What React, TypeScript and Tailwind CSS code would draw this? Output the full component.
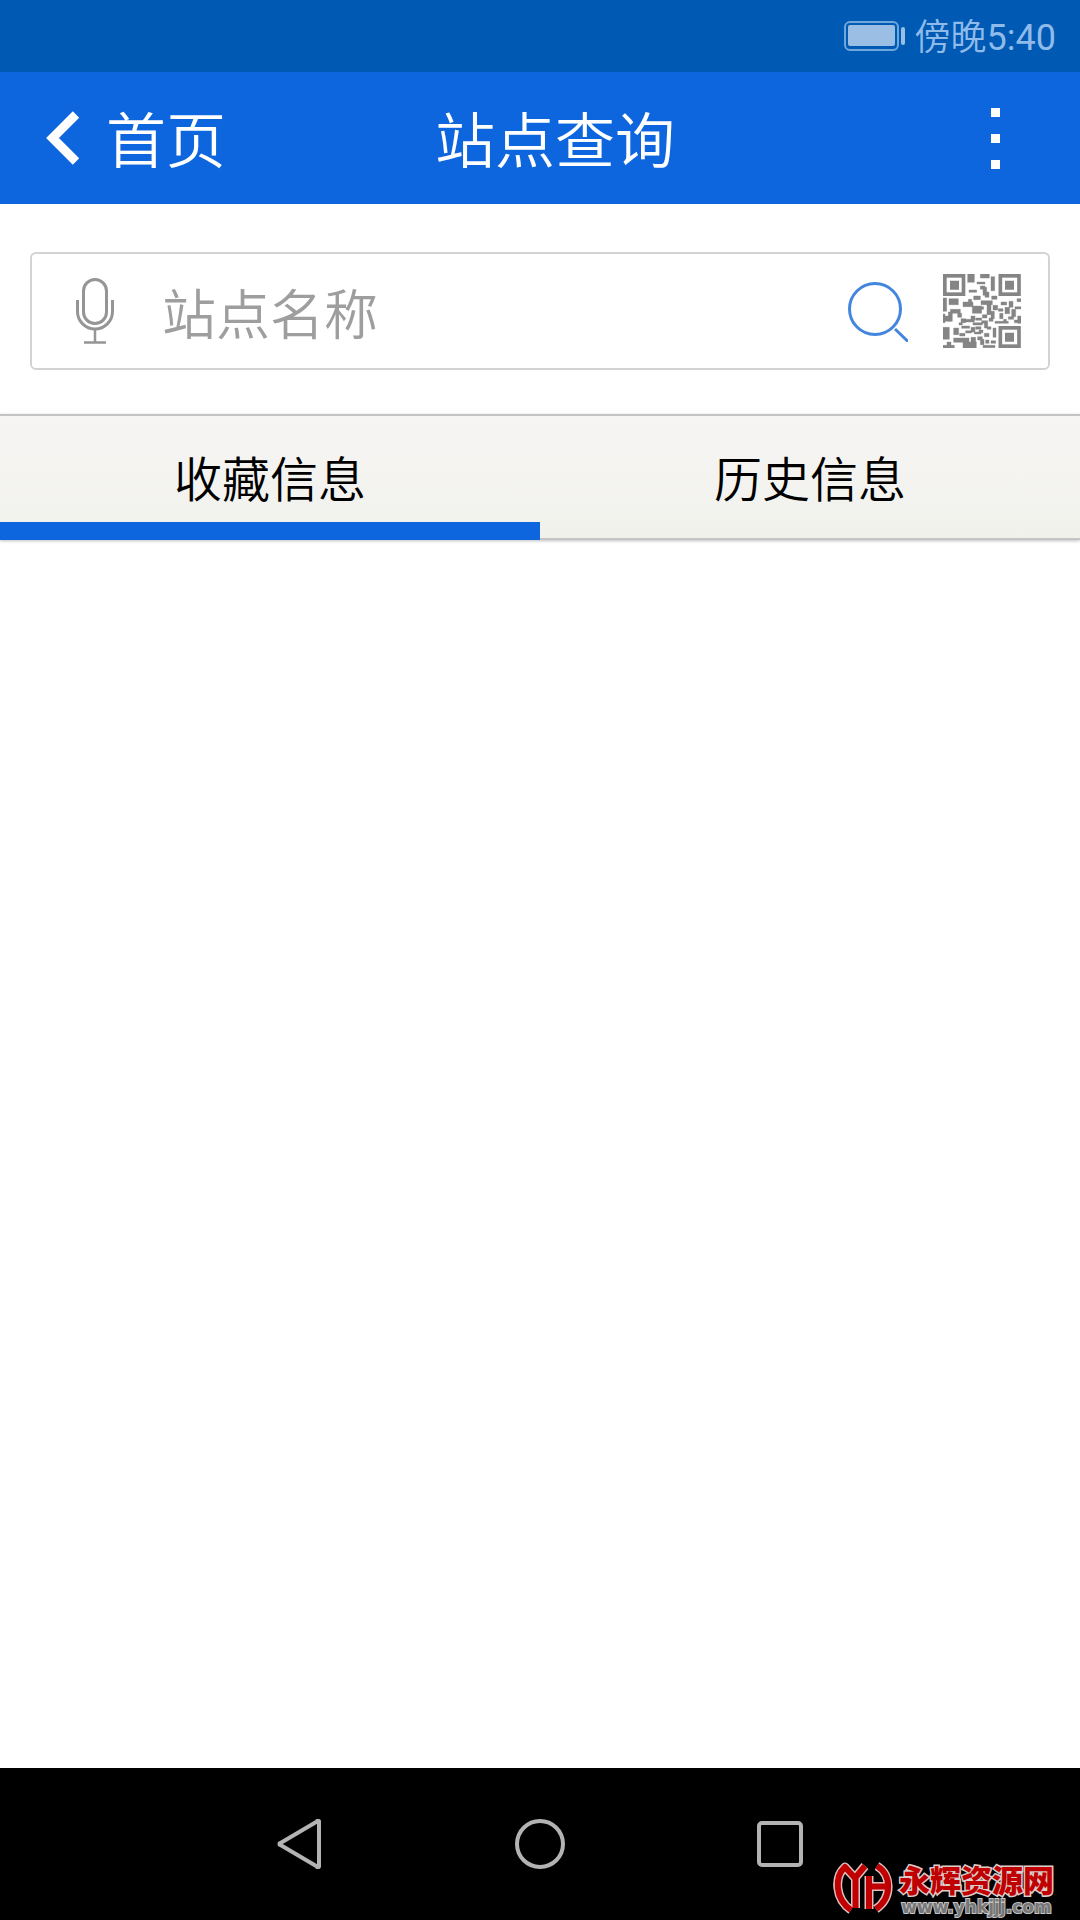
import React, { useState } from 'react';

const FONT = "font-['Roboto','Noto_Sans_CJK_SC',sans-serif]";

const QR_BLOCKS = [
  // top middle
  'M74 0h20v25h-20z M112 0h27v12h-27z M144 8h11v42h-11z M102 24h24v6h-24z',
  'M112 36h14v10h-14z M78 48h23v7h-23z M120 40h11v24h-11z M126 54h12v16h-12z M92 66h20v11h-20z',
  // middle band
  'M0 72h11v40h-11z M18 74h28v18h-28z M60 84h30v14h-30z M76 76h10v16h-10z M88 96h28v22h-28z',
  'M114 80h34v12h-34z M132 88h12v34h-12z M146 66h16v10h-16z M150 94h14v14h-14z M112 98h10v8h-10z',
  'M174 84h17v9h-17z M198 82h12v18h-12z M222 74h12v9h-12z M186 100h14v19h-14z M206 106h12v22h-12z',
  'M216 98h18v7h-18z M166 104h14v8h-14z M144 112h10v22h-10z M224 126h10v22h-10z M196 128h16v8h-16z',
  'M170 118h10v16h-10z M156 142h40v6h-40z M214 138h12v8h-12z M182 136h8v8h-8z',
  // left middle
  'M22 106h30v12h-30z M16 114h12v28h-12z M6 126h16v16h-16z M0 120h6v26h-6z M44 118h12v12h-12z',
  'M0 160h19v36h-19z M32 162h15v20h-15z M54 134h14v12h-14z M48 146h10v7h-10z',
  // centre
  'M62 136h32v8h-32z M84 126h12v12h-12z M98 132h18v7h-18z M90 146h28v7h-28z M118 122h14v10h-14z',
  'M56 156h24v7h-24z M84 160h12v14h-12z M98 158h16v8h-16z M116 140h18v8h-18z M124 148h10v14h-10z',
  'M68 170h18v7h-18z M94 174h20v6h-20z M132 158h12v8h-12z M138 132h12v10h-12z M50 178h16v8h-16z',
  // bottom
  'M32 192h46v13h-46z M12 204h12v12h-12z M0 214h34v8h-34z M60 204h40v18h-40z M84 190h14v18h-14z',
  'M104 188h14v10h-14z M112 196h11v16h-11z M124 178h14v10h-14z M120 214h36v7h-36z M128 198h10v10h-10z',
  'M150 162h9v28h-9z M144 200h14v8h-14z M108 168h12v8h-12z',
].join(' ');

const LOGO_PATH =
  'M18 48C2 37 1 15 12 5l10 11 10-12M22.500 16v30M36 14v33M36 24.500h18M44 4c15 9 15 32-1 43';

const BatteryIcon: React.FC = () => (
  <svg width="62" height="30" viewBox="0 0 62 30" fill="#9bbfe4" aria-hidden="true">
    <rect x="1" y="1" width="53" height="28" rx="5" fill="none" stroke="#6fa6dc" strokeWidth="2" />
    <rect x="4" y="4" width="47" height="21" rx="2" />
    <rect x="57" y="6" width="4" height="18" rx="2" />
  </svg>
);

const QrIcon: React.FC = () => (
  <svg width="78" height="74" viewBox="0 0 234 222" fill="#858585" aria-hidden="true">
    <g fill="none" stroke="#858585" strokeWidth="11">
      <rect x="5.500" y="5.500" width="56" height="55" />
      <rect x="172" y="5.500" width="56" height="55" />
      <rect x="172" y="161.500" width="56" height="55" />
    </g>
    <path d="M21 20h27v27h-27z M186 20h27v27h-27z M186 176h27v27h-27z" />
    <path d={QR_BLOCKS} stroke="#858585" strokeWidth="2" strokeOpacity="0.6" />
  </svg>
);

const StatusBar: React.FC = () => (
  <div className="flex h-[72px] items-center justify-end gap-[9px] bg-[#0059b3] pr-6">
    <BatteryIcon />
    <span className="pt-1 text-[36px] leading-[48px] font-[350] text-[#8fbbea]">
      傍晚<span className="font-normal">5:40</span>
    </span>
  </div>
);

const Header: React.FC = () => (
  <header className="grid h-[132px] grid-cols-[1fr_auto_1fr] items-center bg-[#0d66dd] pl-[46px] pr-4 text-[60px] leading-[80px] font-[350] text-white">
    <a href="#home" className="flex items-center gap-[26px] justify-self-start">
      <svg width="34" height="54" viewBox="0 0 34 54" fill="none" stroke="#fff" strokeWidth="9" aria-hidden="true">
        <path d="M30 3.5 6.5 27 30 50.5" />
      </svg>
      <span className="pt-[10px]">首页</span>
    </a>
    <h1 className="pt-[10px]">站点查询</h1>
    <button type="button" aria-label="更多" className="flex flex-col gap-[17px] justify-self-end px-16 py-4">
      <span className="size-[9px] bg-white" />
      <span className="size-[9px] bg-white" />
      <span className="size-[9px] bg-white" />
    </button>
  </header>
);

const SearchBox: React.FC = () => (
  <form
    className="mx-[30px] mt-12 mb-11 flex h-[118px] items-center rounded-md border-2 border-[#d3d3d3] bg-white pr-[27px] pl-11"
    onSubmit={(e) => e.preventDefault()}
  >
    <button type="button" aria-label="语音输入">
      <svg width="38" height="66" viewBox="0 0 38 66" fill="none" stroke="#959595" strokeWidth="3" aria-hidden="true">
        <rect x="7.500" y="1.500" width="23" height="44" rx="11.500" />
        <path d="M1.500 22v11.500a17.500 17.500 0 0 0 35 0V22" />
        <path d="M19 51v13M8 64.500h22" strokeWidth="2.500" />
      </svg>
    </button>
    <input
      type="text"
      aria-label="站点名称"
      placeholder="站点名称"
      className="ml-12 h-[90px] min-w-0 flex-1 pt-[10px] text-[54px] font-[350] text-gray-800 outline-none placeholder:text-[#9e9e9e]"
    />
    <button type="submit" aria-label="搜索" className="pt-0.5">
      <svg width="60" height="60" viewBox="0 0 60 60" fill="none" stroke="#4485de" strokeWidth="3" aria-hidden="true">
        <circle cx="27" cy="27" r="25.500" />
        <path d="M47 47 60 59.500" />
      </svg>
    </button>
    <button type="button" aria-label="扫描二维码" className="ml-[35px]">
      <QrIcon />
    </button>
  </form>
);

const TABS = ['收藏信息', '历史信息'];

const Tabs: React.FC = () => {
  const [active, setActive] = useState(0);
  return (
    <div
      role="tablist"
      className="grid h-[126px] grid-cols-2 border-t-2 border-[#c4c4c4] bg-linear-to-b from-[#f6f5f4] to-[#f1f1ec] shadow-[0_1px_3px_rgba(0,0,0,0.25)]"
    >
      {TABS.map((label, i) => (
        <button
          key={label}
          type="button"
          role="tab"
          aria-selected={active === i}
          onClick={() => setActive(i)}
          className="flex flex-col text-[48px] leading-[64px] font-[350] text-black"
        >
          <span className="flex w-full flex-1 items-end justify-center pb-[9px]">{label}</span>
          <span
            className={
              active === i
                ? 'h-[18px] w-full bg-[#0d66dd]'
                : 'h-[18px] w-full border-b-2 border-[#c4c4c4]'
            }
          />
        </button>
      ))}
    </div>
  );
};

const Watermark: React.FC = () => (
  <div className="absolute right-[26px] bottom-1 flex items-start gap-1.5">
    <svg width="60" height="54" viewBox="0 0 60 54" fill="none" strokeLinejoin="round" aria-hidden="true">
      <path d={LOGO_PATH} stroke="#dcc0c0" strokeWidth="9" />
      <path d={LOGO_PATH} stroke="#c00000" strokeWidth="6" />
    </svg>
    <div className="flex flex-col items-center pt-1">
      <span className="text-[31px] leading-[32px] font-black text-[#c00000] [-webkit-text-stroke:3px_#dccccc] [paint-order:stroke]">
        永辉资源网
      </span>
      <span className="font-['DejaVu_Sans',sans-serif] text-[17px] leading-[18px] font-bold text-[#777777] [-webkit-text-stroke:2px_#c4c4c4] [paint-order:stroke]">
        www.yhkjjj.com
      </span>
    </div>
  </div>
);

const NavBar: React.FC = () => (
  <nav className="relative flex h-[152px] items-center justify-center bg-black">
    <button type="button" aria-label="返回" className="flex w-60 justify-center">
      <svg width="50" height="50" viewBox="0 0 50 50" fill="none" stroke="#b3b3b3" strokeWidth="4" strokeLinejoin="round" aria-hidden="true">
        <path d="M44 3v44a1 1 0 0 1-2 .5L5.500 26a1 1 0 0 1 0-2L42 2.500a1 1 0 0 1 2 .5z" />
      </svg>
    </button>
    <button type="button" aria-label="主屏幕" className="flex w-60 justify-center">
      <span className="size-[50px] rounded-full border-4 border-[#b3b3b3]" />
    </button>
    <button type="button" aria-label="最近任务" className="flex w-60 justify-center">
      <span className="size-[46px] rounded-[5px] border-4 border-[#b3b3b3]" />
    </button>
    <Watermark />
  </nav>
);

export default function App() {
  return (
    <div lang="zh-CN" className={`flex min-h-screen flex-col bg-white ${FONT}`}>
      <StatusBar />
      <Header />
      <main className="flex-1">
        <SearchBox />
        <Tabs />
      </main>
      <NavBar />
    </div>
  );
}
